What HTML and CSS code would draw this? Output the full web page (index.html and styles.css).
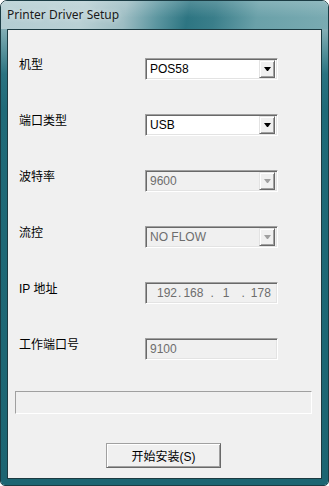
FILE: index.html
```html
<!DOCTYPE html>
<html lang="zh">
<head>
  <meta charset="UTF-8" />
  <meta name="viewport" content="width=device-width, initial-scale=1.0" />
  <title>Printer Driver Setup</title>
  <link rel="stylesheet" href="styles.css">
</head>
<body>
  <div class="window">
    <div class="titlebar">
      <span class="title">Printer Driver Setup</span>
    </div>
    <div class="frame">
      <div class="client">
        <div class="fields">
          <label>机型</label>
          <div class="combo">
            <span class="value">POS58</span>
            <span class="arrow"><svg width="7" height="4" viewBox="0 0 7 4"><polygon points="0,0 7,0 4,4 3,4" /></svg></span>
          </div>

          <label>端口类型</label>
          <div class="combo">
            <span class="value">USB</span>
            <span class="arrow"><svg width="7" height="4" viewBox="0 0 7 4"><polygon points="0,0 7,0 4,4 3,4" /></svg></span>
          </div>

          <label>波特率</label>
          <div class="combo disabled">
            <span class="value">9600</span>
            <span class="arrow"><svg width="7" height="4" viewBox="0 0 7 4"><polygon points="0,0 7,0 4,4 3,4" /></svg></span>
          </div>

          <label>流控</label>
          <div class="combo disabled">
            <span class="value">NO FLOW</span>
            <span class="arrow"><svg width="7" height="4" viewBox="0 0 7 4"><polygon points="0,0 7,0 4,4 3,4" /></svg></span>
          </div>

          <label>IP 地址</label>
          <div class="field ip">
            <span class="oct o1">192</span><span class="dot d1">.</span>
            <span class="oct o2">168</span><span class="dot d2">.</span>
            <span class="oct o3">1</span><span class="dot d3">.</span>
            <span class="oct o4">178</span>
          </div>

          <label>工作端口号</label>
          <div class="field">
            <span class="value">9100</span>
          </div>
        </div>

        <div class="status"></div>

        <button class="install" type="button">开始安装(S)</button>
      </div>
    </div>
  </div>
</body>
</html>
```

FILE: styles.css
```css
body {
  margin: 0;
  background: #ffffff;
  font-family: 'Liberation Sans', 'Noto Sans CJK SC', sans-serif;
  font-size: 12px;
  color: #000;
}
.window {
  width: 329px;
  height: 486px;
  box-sizing: border-box;
  border: 1px solid #1b3c44;
  border-radius: 7px 7px 5px 5px;
  overflow: hidden;
  display: flex;
  flex-direction: column;
  box-shadow: inset 0 0 0 1px rgba(255,255,255,0.3);
}
.titlebar {
  height: 28px;
  flex: none;
  display: flex;
  align-items: center;
  padding-left: 6px;
  background:
    linear-gradient(to bottom, rgba(255,255,255,0.18) 0%, rgba(255,255,255,0) 60%),
    linear-gradient(100deg, #b3cdd2 0%, #b9d0d4 25%, #9dbdc3 38%, #5c96a0 48%, #2d7582 57%, #3a7e8a 65%, #6aa1a9 78%, #7aabb2 100%);
}
.title {
  font-family: 'Noto Sans', sans-serif;
  font-size: 12px;
  color: #1a1a1a;
  text-shadow: 0 0 6px rgba(255,255,255,0.8);
  padding-bottom: 1px;
}
.frame {
  flex: 1;
  display: flex;
  padding: 0 6px 6px 6px;
  background: linear-gradient(to bottom, #84aeb5 0px, #5f97a0 18px, #2a7381 45px, #1f6a78 80px, #1c6572 100%);
}
.client {
  flex: 1;
  border: 1px solid #1b3a41;
  background: #f0f0f0;
  padding-top: 28px;
}
.fields {
  display: grid;
  grid-template-columns: 126px 133px;
  grid-auto-rows: 22px;
  row-gap: 34px;
  padding-left: 11px;
}
.fields label {
  line-height: 14px;
  font-size: 12px;
}
.combo, .field {
  box-sizing: border-box;
  height: 22px;
  border: 1px solid;
  border-color: #a0a0a0 #ffffff #ffffff #a0a0a0;
  box-shadow: inset 1px 1px #696969, inset -1px -1px #e3e3e3;
  padding: 2px;
  display: flex;
  align-items: center;
  background: #ffffff;
}
.combo .value, .field .value {
  flex: 1;
  padding-left: 2px;
  line-height: 18px;
}
.arrow {
  box-sizing: border-box;
  width: 16px;
  height: 18px;
  display: flex;
  align-items: center;
  justify-content: center;
  background: #f0f0f0;
  border: 1px solid;
  border-color: #e3e3e3 #696969 #696969 #e3e3e3;
  box-shadow: inset 1px 1px #ffffff, inset -1px -1px #a0a0a0;
}
.arrow svg {
  fill: #000;
  display: block;
}
.combo.disabled, .field {
  background: #f0f0f0;
  color: #6d6d6d;
}
.combo.disabled .arrow svg {
  fill: #a0a0a0;
}
.ip {
  padding-left: 0;
}
.oct, .dot {
  line-height: 18px;
}
.o1 { margin-left: 11px; }
.d1 { margin-left: 1px; }
.o2 { margin-left: 2px; }
.d2 { margin-left: 7px; }
.o3 { margin-left: 9px; }
.d3 { margin-left: 12px; }
.o4 { margin-left: 6px; }
.status {
  box-sizing: border-box;
  width: 297px;
  height: 23px;
  margin: 31px 0 0 7px;
  border: 1px solid;
  border-color: #a0a0a0 #ffffff #ffffff #a0a0a0;
}
.install {
  display: block;
  box-sizing: border-box;
  width: 115px;
  height: 25px;
  margin: 29px 0 0 98px;
  padding: 0;
  font-family: 'Liberation Sans', 'Noto Sans CJK SC', sans-serif;
  font-size: 12px;
  color: #000;
  background: #f0f0f0;
  border: 1px solid;
  border-color: #a0a0a0 #696969 #696969 #a0a0a0;
  box-shadow: inset 1px 1px #ffffff, inset -1px -1px #a0a0a0;
}
```
